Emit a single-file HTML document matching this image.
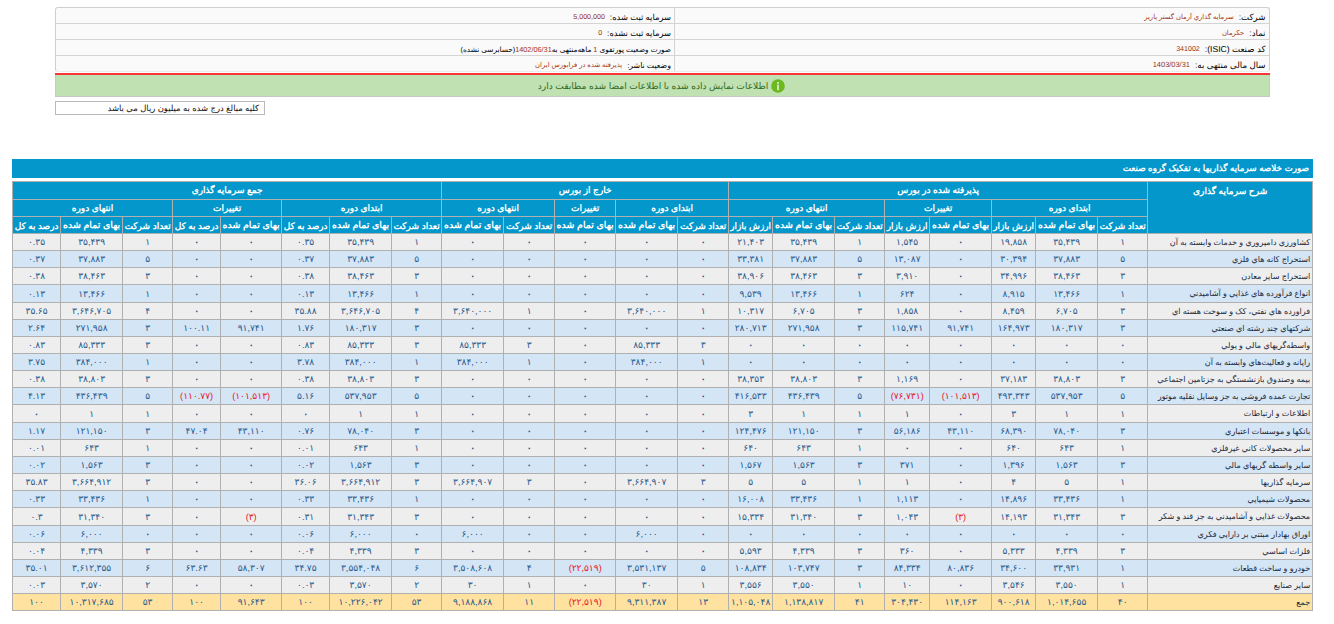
<!DOCTYPE html>
<html lang="fa">
<head>
<meta charset="utf-8">
<title>صورت خلاصه سرمایه گذاریها به تفکیک گروه صنعت</title>
<style>
  html, body { margin: 0; padding: 0; }
  body {
    width: 1334px; height: 624px; overflow: hidden; position: relative;
    background: #ffffff; color: #000;
    font-family: "Liberation Sans", sans-serif;
    font-size: 8px;
    text-rendering: geometricPrecision;
  }
  /* ---------- company info box ---------- */
  .info {
    position: absolute; left: 55px; top: 7px; width: 1215px; height: 65px;
    box-sizing: border-box; border: 1px solid #cfcfcf; border-bottom: 1px solid #ececec;
    border-radius: 3px; background: #fafafa; direction: rtl;
  }
  .info .row {
    position: absolute; right: 0; left: 0; height: 16px; box-sizing: border-box;
    border-bottom: 1px solid #d4d4d4;
  }
  .info .vsep { position: absolute; left: 618px; top: 0; bottom: 0; width: 1px; background: #d4d4d4; }
  .info .cell {
    position: absolute; top: 0; margin-top: 1px; height: 16px; line-height: 17px; white-space: nowrap;
    font-size: 8.6px; color: #000; overflow: hidden;
  }
  .info .cell.r { right: 3.5px; width: 585px; }
  .info .cell.l { right: 598px; width: 610px; }
  .info .v { color: #a8330f; font-size: 6.8px; margin-right: 5px; position: relative; top: -1px; }
  .info .v.n { font-size: 7.1px; color: #96300c; }
  .info .v.dt { font-size: 7.45px; }
  .info .sm { font-size: 7.3px; }
  .info .cell.l { font-size: 8.35px; }
  .info .cell.l.sm { font-size: 7.3px; }
  .info .cell.l.pub { font-size: 7.8px; }
  .info .sm b { font-weight: normal; color: #a8330f; }
  .redline { position: absolute; left: 55px; top: 73px; width: 1215px; height: 2px; background: #f83636; }
  .okbar {
    position: absolute; left: 55px; top: 75px; width: 1215px; height: 22px; box-sizing: border-box;
    background: #c0e1b2; border-bottom: 1px solid #c6c6c6; border-left: 1px solid #c6c9c4; border-right: 1px solid #c6c9c4;
    direction: rtl; text-align: center; padding-right: 2px; line-height: 22px; font-size: 9.1px; color: #2f6a1e; white-space: nowrap;
  }
  .okbar svg { vertical-align: middle; margin-left: 3px; position: relative; top: -1px; }
  .note {
    position: absolute; left: 55px; top: 101px; width: 210px; height: 14px; box-sizing: border-box;
    border: 1px solid #b9b9b9; background: #fff; direction: rtl; text-align: right;
    padding-right: 5px; line-height: 13px; font-size: 8.45px; color: #111; white-space: nowrap;
  }
  /* ---------- main table ---------- */
  .title {
    position: absolute; left: 12px; top: 159px; width: 1301px; height: 19px; box-sizing: border-box;
    background: #0397cb; color: #fff; font-weight: bold; direction: rtl; text-align: right;
    padding-right: 4px; line-height: 19px; font-size: 8.8px; white-space: nowrap;
  }
  table.grid {
    position: absolute; left: 12px; top: 181px; width: 1301px;
    border-collapse: collapse; table-layout: fixed; direction: rtl;
  }
  table.grid th, table.grid td {
    border: 1px solid #b0b0b0; padding: 0; margin: 0; overflow: hidden; white-space: nowrap;
    text-align: center; vertical-align: middle; box-sizing: border-box; line-height: 1;
  }
  table.grid th { background: #0397cb; color: #fff; font-weight: bold; font-size: 9px; }
  table.grid th.c1, table.grid th.c2, table.grid th.c3 { padding-top: 2px; }
  table.grid th.c1 { font-size: 9px; }
  table.grid th.c2 { font-size: 9.45px; }
  table.grid th.c3 { font-size: 8.93px; }
  table.grid th.desc { font-size: 9.1px; }
  table.grid th.desc { vertical-align: top; }
  table.grid th.desc span { display: block; margin-top: 5px; }
  table.grid td { color: #2a5a8c; font-size: 9.1px; padding-top: 2px; }
  table.grid td.d { text-align: right; padding-right: 2px; color: #1b2a3c; font-size: 8.05px; }
  table.grid td.neg { color: #e8152a; }
  table.grid td.z { font-weight: bold; color: #1f4f86; }
  tr.a td { background: #eeeeee; }
  tr.b td { background: #d4e5f6; }
  tr.tot td { background: #ffe2a0; }
</style>
</head>
<body>

<div class="info">
  <div class="row" style="top:0"></div>
  <div class="row" style="top:16px"></div>
  <div class="row" style="top:32px"></div>
  <div class="row" style="top:48px; border-bottom:0"></div>
  <div class="vsep"></div>

  <div class="cell r" style="top:0">شرکت:<span class="v">سرمايه گذاري آرمان گستر پاريز</span></div>
  <div class="cell r" style="top:16px">نماد:<span class="v">حکرمان</span></div>
  <div class="cell r" style="top:32px">کد صنعت (ISIC):<span class="v n">341002</span></div>
  <div class="cell r" style="top:48px">سال مالی منتهی به:<span class="v n dt">1403/03/31</span></div>

  <div class="cell l" style="top:0">سرمایه ثبت شده:<span class="v n">5,000,000</span></div>
  <div class="cell l" style="top:16px">سرمایه ثبت نشده:<span class="v n">0</span></div>
  <div class="cell l sm" style="top:32px">صورت وضعیت پورتفوی <b>1</b> ماهه‌منتهی به<b>1402/06/31</b>(حسابرسی نشده)</div>
  <div class="cell l pub" style="top:48px">وضعیت ناشر:<span class="v">پذيرفته شده در فرابورس ايران</span></div>
</div>
<div class="redline"></div>
<div class="okbar"><svg width="14" height="14" viewBox="0 0 14 14"><circle cx="7" cy="7" r="6.8" fill="#6bb81f"/><circle cx="7" cy="3.9" r="0.95" fill="#eef8e0"/><rect x="6.25" y="5.6" width="1.5" height="5.6" rx="0.5" fill="#eef8e0"/></svg>اطلاعات نمایش داده شده با اطلاعات امضا شده مطابقت دارد</div>
<div class="note">کلیه مبالغ درج شده به میلیون ریال می باشد</div>

<div class="title">صورت خلاصه سرمایه گذاریها به تفکیک گروه صنعت</div>
<table class="grid" dir="rtl">
<colgroup><col style="width:165px"><col style="width:50px"><col style="width:62px"><col style="width:44px"><col style="width:62px"><col style="width:45px"><col style="width:50px"><col style="width:62px"><col style="width:44px"><col style="width:51px"><col style="width:62px"><col style="width:61px"><col style="width:51px"><col style="width:62px"><col style="width:50px"><col style="width:62px"><col style="width:48px"><col style="width:61px"><col style="width:48px"><col style="width:50px"><col style="width:62px"><col style="width:48px"></colgroup>
<thead>
<tr style="height:18px"><th rowspan="3" class="desc"><span>شرح سرمایه گذاری</span></th><th colspan="8">پذیرفته شده در بورس</th><th colspan="5">خارج از بورس</th><th colspan="8">جمع سرمایه گذاری</th></tr>
<tr style="height:17px"><th colspan="3">ابتدای دوره</th><th colspan="2">تغییرات</th><th colspan="3">انتهای دوره</th><th colspan="2">ابتدای دوره</th><th colspan="1">تغییرات</th><th colspan="2">انتهای دوره</th><th colspan="3">ابتدای دوره</th><th colspan="2">تغییرات</th><th colspan="3">انتهای دوره</th></tr>
<tr style="height:17px"><th class="c1">تعداد شرکت</th><th class="c2">بهای تمام شده</th><th class="c3">ارزش بازار</th><th class="c2">بهای تمام شده</th><th class="c3">ارزش بازار</th><th class="c1">تعداد شرکت</th><th class="c2">بهای تمام شده</th><th class="c3">ارزش بازار</th><th class="c1">تعداد شرکت</th><th class="c2">بهای تمام شده</th><th class="c2">بهای تمام شده</th><th class="c1">تعداد شرکت</th><th class="c2">بهای تمام شده</th><th class="c1">تعداد شرکت</th><th class="c2">بهای تمام شده</th><th class="c3">درصد به کل</th><th class="c2">بهای تمام شده</th><th class="c3">درصد به کل</th><th class="c1">تعداد شرکت</th><th class="c2">بهای تمام شده</th><th class="c3">درصد به کل</th></tr>
</thead><tbody>
<tr class="a" style="height:17px"><td class="d">کشاورزي دامپروري و خدمات وابسته به آن</td><td>۱</td><td>۳۵,۴۳۹</td><td>۱۹,۸۵۸</td><td class="z">۰</td><td>۱,۵۴۵</td><td>۱</td><td>۳۵,۴۳۹</td><td>۲۱,۴۰۳</td><td class="z">۰</td><td class="z">۰</td><td class="z">۰</td><td class="z">۰</td><td class="z">۰</td><td>۱</td><td>۳۵,۴۳۹</td><td>۰.۳۵</td><td class="z">۰</td><td class="z">۰</td><td>۱</td><td>۳۵,۴۳۹</td><td>۰.۳۵</td></tr>
<tr class="b" style="height:17px"><td class="d">استخراج کانه هاي فلزي</td><td>۵</td><td>۳۷,۸۸۳</td><td>۳۰,۳۹۴</td><td class="z">۰</td><td>۱۳,۰۸۷</td><td>۵</td><td>۳۷,۸۸۳</td><td>۳۳,۳۸۱</td><td class="z">۰</td><td class="z">۰</td><td class="z">۰</td><td class="z">۰</td><td class="z">۰</td><td>۵</td><td>۳۷,۸۸۳</td><td>۰.۳۷</td><td class="z">۰</td><td class="z">۰</td><td>۵</td><td>۳۷,۸۸۳</td><td>۰.۳۷</td></tr>
<tr class="a" style="height:17px"><td class="d">استخراج ساير معادن</td><td>۳</td><td>۳۸,۴۶۳</td><td>۳۴,۹۹۶</td><td class="z">۰</td><td>۳,۹۱۰</td><td>۳</td><td>۳۸,۴۶۳</td><td>۳۸,۹۰۶</td><td class="z">۰</td><td class="z">۰</td><td class="z">۰</td><td class="z">۰</td><td class="z">۰</td><td>۳</td><td>۳۸,۴۶۳</td><td>۰.۳۸</td><td class="z">۰</td><td class="z">۰</td><td>۳</td><td>۳۸,۴۶۳</td><td>۰.۳۸</td></tr>
<tr class="b" style="height:18px"><td class="d">انواع فرآورده هاي غذايي و آشاميدني</td><td>۱</td><td>۱۳,۴۶۶</td><td>۸,۹۱۵</td><td class="z">۰</td><td>۶۲۴</td><td>۱</td><td>۱۳,۴۶۶</td><td>۹,۵۳۹</td><td class="z">۰</td><td class="z">۰</td><td class="z">۰</td><td class="z">۰</td><td class="z">۰</td><td>۱</td><td>۱۳,۴۶۶</td><td>۰.۱۳</td><td class="z">۰</td><td class="z">۰</td><td>۱</td><td>۱۳,۴۶۶</td><td>۰.۱۳</td></tr>
<tr class="a" style="height:17px"><td class="d">فراورده هاي نفتي، کک و سوخت هسته اي</td><td>۳</td><td>۶,۷۰۵</td><td>۸,۴۵۹</td><td class="z">۰</td><td>۱,۸۵۸</td><td>۳</td><td>۶,۷۰۵</td><td>۱۰,۳۱۷</td><td>۱</td><td>۳,۶۴۰,۰۰۰</td><td class="z">۰</td><td>۱</td><td>۳,۶۴۰,۰۰۰</td><td>۴</td><td>۳,۶۴۶,۷۰۵</td><td>۳۵.۸۸</td><td class="z">۰</td><td class="z">۰</td><td>۴</td><td>۳,۶۴۶,۷۰۵</td><td>۳۵.۶۵</td></tr>
<tr class="b" style="height:17px"><td class="d">شرکتهاي چند رشته اي صنعتي</td><td>۳</td><td>۱۸۰,۳۱۷</td><td>۱۶۴,۹۷۳</td><td>۹۱,۷۴۱</td><td>۱۱۵,۷۴۱</td><td>۳</td><td>۲۷۱,۹۵۸</td><td>۲۸۰,۷۱۳</td><td class="z">۰</td><td class="z">۰</td><td class="z">۰</td><td class="z">۰</td><td class="z">۰</td><td>۳</td><td>۱۸۰,۳۱۷</td><td>۱.۷۶</td><td>۹۱,۷۴۱</td><td>۱۰۰.۱۱</td><td>۳</td><td>۲۷۱,۹۵۸</td><td>۲.۶۴</td></tr>
<tr class="a" style="height:17px"><td class="d">واسطه‌گريهاي مالي و پولي</td><td class="z">۰</td><td class="z">۰</td><td class="z">۰</td><td class="z">۰</td><td class="z">۰</td><td class="z">۰</td><td class="z">۰</td><td class="z">۰</td><td>۳</td><td>۸۵,۳۳۳</td><td class="z">۰</td><td>۳</td><td>۸۵,۳۳۳</td><td>۳</td><td>۸۵,۳۳۳</td><td>۰.۸۳</td><td class="z">۰</td><td class="z">۰</td><td>۳</td><td>۸۵,۳۳۳</td><td>۰.۸۳</td></tr>
<tr class="b" style="height:17px"><td class="d">رايانه و فعاليت‌هاي وابسته به آن</td><td class="z">۰</td><td class="z">۰</td><td class="z">۰</td><td class="z">۰</td><td class="z">۰</td><td class="z">۰</td><td class="z">۰</td><td class="z">۰</td><td>۱</td><td>۳۸۴,۰۰۰</td><td class="z">۰</td><td>۱</td><td>۳۸۴,۰۰۰</td><td>۱</td><td>۳۸۴,۰۰۰</td><td>۳.۷۸</td><td class="z">۰</td><td class="z">۰</td><td>۱</td><td>۳۸۴,۰۰۰</td><td>۳.۷۵</td></tr>
<tr class="a" style="height:17px"><td class="d">بيمه وصندوق بازنشستگي به جزتامين اجتماعي</td><td>۳</td><td>۳۸,۸۰۳</td><td>۳۷,۱۸۳</td><td class="z">۰</td><td>۱,۱۶۹</td><td>۳</td><td>۳۸,۸۰۳</td><td>۳۸,۳۵۳</td><td class="z">۰</td><td class="z">۰</td><td class="z">۰</td><td class="z">۰</td><td class="z">۰</td><td>۳</td><td>۳۸,۸۰۳</td><td>۰.۳۸</td><td class="z">۰</td><td class="z">۰</td><td>۳</td><td>۳۸,۸۰۳</td><td>۰.۳۸</td></tr>
<tr class="b" style="height:17px"><td class="d">تجارت عمده فروشي به جز وسايل نقليه موتور</td><td>۵</td><td>۵۳۷,۹۵۳</td><td>۴۹۳,۳۴۳</td><td class="neg">(۱۰۱,۵۱۳)</td><td class="neg">(۷۶,۷۳۱)</td><td>۵</td><td>۴۳۶,۴۳۹</td><td>۴۱۶,۵۳۳</td><td class="z">۰</td><td class="z">۰</td><td class="z">۰</td><td class="z">۰</td><td class="z">۰</td><td>۵</td><td>۵۳۷,۹۵۳</td><td>۵.۱۶</td><td class="neg">(۱۰۱,۵۱۳)</td><td class="neg">(۱۱۰.۷۷)</td><td>۵</td><td>۴۳۶,۴۳۹</td><td>۴.۱۳</td></tr>
<tr class="a" style="height:18px"><td class="d">اطلاعات و ارتباطات</td><td>۱</td><td>۱</td><td>۳</td><td class="z">۰</td><td>۱</td><td>۱</td><td>۱</td><td>۳</td><td class="z">۰</td><td class="z">۰</td><td class="z">۰</td><td class="z">۰</td><td class="z">۰</td><td>۱</td><td>۱</td><td class="z">۰</td><td class="z">۰</td><td class="z">۰</td><td>۱</td><td>۱</td><td class="z">۰</td></tr>
<tr class="b" style="height:17px"><td class="d">بانکها و موسسات اعتباري</td><td>۳</td><td>۷۸,۰۴۰</td><td>۶۸,۳۹۰</td><td>۴۳,۱۱۰</td><td>۵۶,۱۸۶</td><td>۳</td><td>۱۲۱,۱۵۰</td><td>۱۲۴,۴۷۶</td><td class="z">۰</td><td class="z">۰</td><td class="z">۰</td><td class="z">۰</td><td class="z">۰</td><td>۳</td><td>۷۸,۰۴۰</td><td>۰.۷۶</td><td>۴۳,۱۱۰</td><td>۴۷.۰۴</td><td>۳</td><td>۱۲۱,۱۵۰</td><td>۱.۱۷</td></tr>
<tr class="a" style="height:17px"><td class="d">ساير محصولات کاني غيرفلزي</td><td>۱</td><td>۶۴۳</td><td>۶۴۰</td><td class="z">۰</td><td class="z">۰</td><td>۱</td><td>۶۴۳</td><td>۶۴۰</td><td class="z">۰</td><td class="z">۰</td><td class="z">۰</td><td class="z">۰</td><td class="z">۰</td><td>۱</td><td>۶۴۳</td><td>۰.۰۱</td><td class="z">۰</td><td class="z">۰</td><td>۱</td><td>۶۴۳</td><td>۰.۰۱</td></tr>
<tr class="b" style="height:17px"><td class="d">ساير واسطه گريهاي مالي</td><td>۳</td><td>۱,۵۶۳</td><td>۱,۳۹۶</td><td class="z">۰</td><td>۳۷۱</td><td>۳</td><td>۱,۵۶۳</td><td>۱,۵۶۷</td><td class="z">۰</td><td class="z">۰</td><td class="z">۰</td><td class="z">۰</td><td class="z">۰</td><td>۳</td><td>۱,۵۶۳</td><td>۰.۰۲</td><td class="z">۰</td><td class="z">۰</td><td>۳</td><td>۱,۵۶۳</td><td>۰.۰۲</td></tr>
<tr class="a" style="height:17px"><td class="d">سرمايه گذاريها</td><td>۱</td><td>۵</td><td>۴</td><td class="z">۰</td><td>۱</td><td>۱</td><td>۵</td><td>۵</td><td>۳</td><td>۳,۶۶۴,۹۰۷</td><td class="z">۰</td><td>۳</td><td>۳,۶۶۴,۹۰۷</td><td>۳</td><td>۳,۶۶۴,۹۱۲</td><td>۳۶.۰۶</td><td class="z">۰</td><td class="z">۰</td><td>۳</td><td>۳,۶۶۴,۹۱۲</td><td>۳۵.۸۳</td></tr>
<tr class="b" style="height:17px"><td class="d">محصولات شيميايي</td><td>۱</td><td>۳۳,۴۳۶</td><td>۱۴,۸۹۶</td><td class="z">۰</td><td>۱,۱۱۳</td><td>۱</td><td>۳۳,۴۳۶</td><td>۱۶,۰۰۸</td><td class="z">۰</td><td class="z">۰</td><td class="z">۰</td><td class="z">۰</td><td class="z">۰</td><td>۱</td><td>۳۳,۴۳۶</td><td>۰.۳۳</td><td class="z">۰</td><td class="z">۰</td><td>۱</td><td>۳۳,۴۳۶</td><td>۰.۳۳</td></tr>
<tr class="a" style="height:18px"><td class="d">محصولات غذايي و آشاميدني به جز قند و شکر</td><td>۳</td><td>۳۱,۳۴۳</td><td>۱۴,۱۹۳</td><td class="neg">(۳)</td><td>۱,۰۴۳</td><td>۳</td><td>۳۱,۳۴۰</td><td>۱۵,۳۳۴</td><td class="z">۰</td><td class="z">۰</td><td class="z">۰</td><td class="z">۰</td><td class="z">۰</td><td>۳</td><td>۳۱,۳۴۳</td><td>۰.۳۱</td><td class="neg">(۳)</td><td class="z">۰</td><td>۳</td><td>۳۱,۳۴۰</td><td>۰.۳</td></tr>
<tr class="b" style="height:17px"><td class="d">اوراق بهادار مبتني بر دارايي فکري</td><td class="z">۰</td><td class="z">۰</td><td class="z">۰</td><td class="z">۰</td><td class="z">۰</td><td class="z">۰</td><td class="z">۰</td><td class="z">۰</td><td class="z">۰</td><td>۶,۰۰۰</td><td class="z">۰</td><td class="z">۰</td><td>۶,۰۰۰</td><td class="z">۰</td><td>۶,۰۰۰</td><td>۰.۰۶</td><td class="z">۰</td><td class="z">۰</td><td class="z">۰</td><td>۶,۰۰۰</td><td>۰.۰۶</td></tr>
<tr class="a" style="height:17px"><td class="d">فلزات اساسي</td><td>۳</td><td>۴,۳۳۹</td><td>۵,۳۳۳</td><td class="z">۰</td><td>۳۶۰</td><td>۳</td><td>۴,۳۳۹</td><td>۵,۵۹۳</td><td class="z">۰</td><td class="z">۰</td><td class="z">۰</td><td class="z">۰</td><td class="z">۰</td><td>۳</td><td>۴,۳۳۹</td><td>۰.۰۴</td><td class="z">۰</td><td class="z">۰</td><td>۳</td><td>۴,۳۳۹</td><td>۰.۰۴</td></tr>
<tr class="b" style="height:17px"><td class="d">خودرو و ساخت قطعات</td><td>۱</td><td>۳۳,۹۳۱</td><td>۳۴,۶۰۰</td><td>۸۰,۸۳۶</td><td>۸۴,۳۳۴</td><td>۳</td><td>۱۰۳,۷۴۷</td><td>۱۰۸,۸۳۴</td><td>۵</td><td>۳,۵۳۱,۱۳۷</td><td class="neg">(۲۲,۵۱۹)</td><td>۴</td><td>۳,۵۰۸,۶۰۸</td><td>۶</td><td>۳,۵۵۴,۰۴۸</td><td>۳۴.۷۵</td><td>۵۸,۳۰۷</td><td>۶۳.۶۳</td><td>۶</td><td>۳,۶۱۲,۳۵۵</td><td>۳۵.۰۱</td></tr>
<tr class="a" style="height:17px"><td class="d">ساير صنايع</td><td>۱</td><td>۳,۵۵۰</td><td>۳,۵۴۶</td><td class="z">۰</td><td>۱۰</td><td>۱</td><td>۳,۵۵۰</td><td>۳,۵۵۶</td><td>۱</td><td>۳۰</td><td class="z">۰</td><td>۱</td><td>۳۰</td><td>۲</td><td>۳,۵۷۰</td><td>۰.۰۳</td><td class="z">۰</td><td class="z">۰</td><td>۲</td><td>۳,۵۷۰</td><td>۰.۰۳</td></tr>
<tr class="tot" style="height:17px"><td class="d">جمع</td><td>۴۰</td><td>۱,۰۱۴,۶۵۵</td><td>۹۰۰,۶۱۸</td><td>۱۱۴,۱۶۳</td><td>۳۰۴,۴۳۰</td><td>۴۱</td><td>۱,۱۳۸,۸۱۷</td><td>۱,۱۰۵,۰۴۸</td><td>۱۳</td><td>۹,۳۱۱,۳۸۷</td><td class="neg">(۲۲,۵۱۹)</td><td>۱۱</td><td>۹,۱۸۸,۸۶۸</td><td>۵۳</td><td>۱۰,۲۲۶,۰۴۲</td><td>۱۰۰</td><td>۹۱,۶۴۳</td><td>۱۰۰</td><td>۵۳</td><td>۱۰,۳۱۷,۶۸۵</td><td>۱۰۰</td></tr>
</tbody></table>

</body>
</html>
